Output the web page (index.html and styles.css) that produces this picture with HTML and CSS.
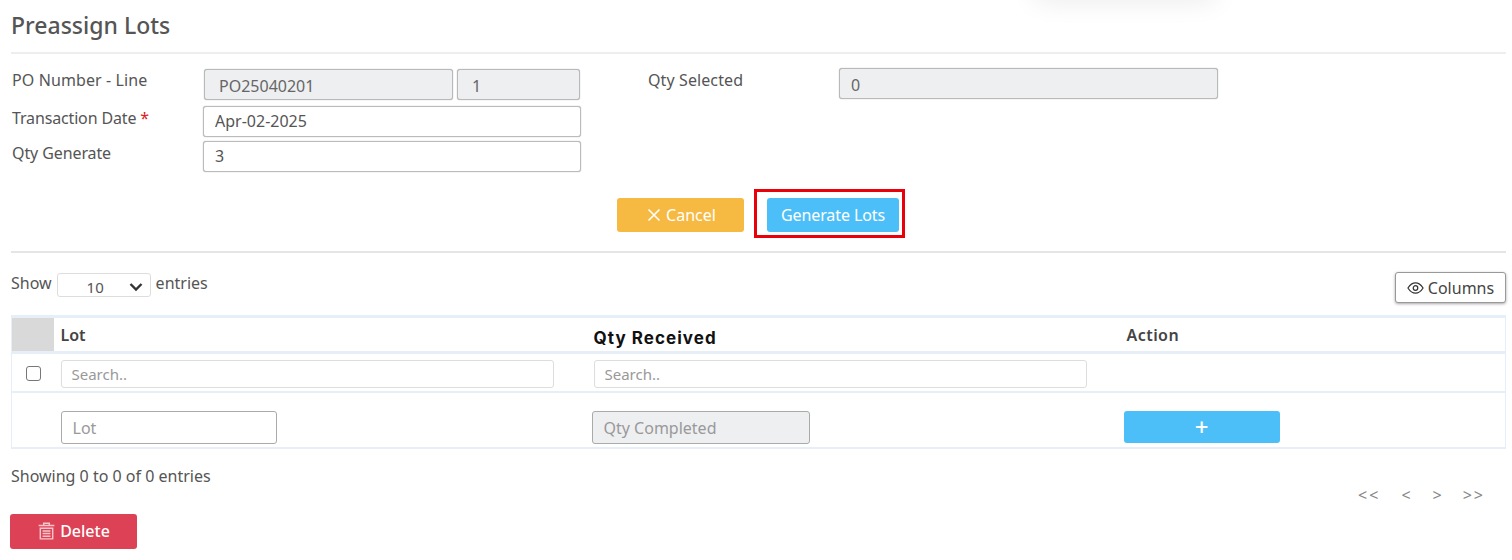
FILE: index.html
```html
<!DOCTYPE html>
<html lang="en">
<head>
<meta charset="utf-8">
<title>Preassign Lots</title>
<link rel="stylesheet" href="styles.css">
</head>
<body>
<div class="page">
  <div class="top-glow"></div>
  <h1 class="title">Preassign Lots</h1>
  <form class="form">
    <div class="col-left">
      <div class="row row-po">
        <label class="lbl">PO Number - Line</label>
        <input class="inp disabled po" value="PO25040201" disabled>
        <input class="inp disabled line" value="1" disabled>
      </div>
      <div class="row row-date">
        <label class="lbl">Transaction Date <span class="req">*</span></label>
        <input class="inp wide" value="Apr-02-2025">
      </div>
      <div class="row row-qty">
        <label class="lbl">Qty Generate</label>
        <input class="inp wide" value="3">
      </div>
    </div>
    <div class="col-right">
      <label class="lbl lbl-sel">Qty Selected</label>
      <input class="inp disabled sel" value="0" disabled>
    </div>
  </form>
  <div class="actions">
    <button type="button" class="btn cancel">
      <svg class="x-ico" viewBox="0 0 14 14" width="14" height="14"><path d="M1.5 1.5L12.5 12.5M12.5 1.5L1.5 12.5" stroke="#fff" stroke-width="1.6" fill="none"/></svg>
      Cancel
    </button>
    <div class="highlight"><button type="button" class="btn generate">Generate Lots</button></div>
  </div>
  <div class="toolbar">
    <div class="length">
      <span>Show</span>
      <span class="select"><span class="select-val">10</span>
        <svg viewBox="0 0 14 10" width="14" height="10"><path d="M1.5 2L7 7.5L12.5 2" stroke="#333" stroke-width="2.4" fill="none"/></svg>
      </span>
      <span>entries</span>
    </div>
    <button type="button" class="columns">
      <svg viewBox="0 0 18 14" width="17" height="14"><path d="M1 7C3.5 3 6 1.5 9 1.5S14.500 3 17 7C14.500 11 12 12.500 9 12.500S3.500 11 1 7Z" stroke="#333" stroke-width="1.300" fill="none"/><circle cx="9" cy="7" r="2.400" stroke="#333" stroke-width="1.300" fill="none"/></svg>
      Columns
    </button>
  </div>
  <table class="grid">
    <colgroup><col class="c0"><col class="c1"><col class="c2"><col></colgroup>
    <thead>
      <tr>
        <th class="check-head"></th>
        <th>Lot</th>
        <th class="dark">Qty Received</th>
        <th class="act">Action</th>
      </tr>
    </thead>
    <tbody>
      <tr class="search">
        <td class="check-cell"><input type="checkbox" class="check"></td>
        <td><input class="mini" placeholder="Search.."></td>
        <td><input class="mini" placeholder="Search.."></td>
        <td></td>
      </tr>
      <tr class="entry">
        <td></td>
        <td><input class="cell-inp" placeholder="Lot"></td>
        <td><input class="cell-inp off" placeholder="Qty Completed" disabled></td>
        <td><button type="button" class="btn add">+</button></td>
      </tr>
    </tbody>
  </table>
  <div class="footer">
    <div class="info">Showing 0 to 0 of 0 entries</div>
    <div class="pager"><span>&lt;&lt;</span><span>&lt;</span><span>&gt;</span><span>&gt;&gt;</span></div>
  </div>
  <button type="button" class="btn delete">
    <svg viewBox="0 0 16 16" width="19" height="18"><path d="M5.500 2.500V1.200H10.500V2.500M1 3.200H15M2.500 5.500H13.500V15H2.500ZM4.500 8H11.500M4.500 10.300H11.500M4.500 12.600H11.500" stroke="#f6c5cc" stroke-width="1.300" fill="none"/></svg>
    Delete
  </button>
</div>
</body>
</html>
```
FILE: styles.css
```css
* { box-sizing: border-box; }
html, body { margin: 0; background: #fff; }
body { font-family: "Noto Sans", "Open Sans", sans-serif; color: #555; font-size: 16px; }
.page { width: 1512px; height: 560px; padding: 0 6px 0 11px; overflow: hidden; position: relative; }
.top-glow { position: absolute; left: 1035px; top: -26px; width: 180px; height: 26px; box-shadow: 0 0 28px rgba(0,0,0,.09); }
.title { margin: 0; height: 43px; padding-top: 8px; font-size: 23px; line-height: 34px; font-weight: 500; color: #555; }
.form { display: flex; border-top: 2px solid #eee; height: 139px; padding-top: 15px; margin-top: 9px; }
.col-left { width: 570px; flex: none; }
.row { display: flex; align-items: flex-start; }
.lbl { font-size: 16px; line-height: 20px; width: 192px; flex: none; color: #555; white-space: nowrap; letter-spacing: .1px; }
.req { color: #e02020; }
.row-po { height: 37px; }
.row-date { height: 35px; }
.row-qty { height: 35px; }
.row-po .lbl { padding-top: 1px; padding-left: 1px; }
.row-date .lbl { padding-left: 1px; padding-top: 2px; letter-spacing: -.15px; }
.row-qty .lbl { padding-left: 1px; padding-top: 2px; letter-spacing: -.1px; }
.inp { font: 16px "Noto Sans", sans-serif; height: 31px; border: 1px solid #bbb; border-radius: 3px; color: #555; background: #fff; padding: 0 11px; outline: 0; box-shadow: 0 0 1px #999; }
.inp.disabled { background: #eeeff1; color: #666; border-color: #b9b9b9; }
.po { width: 249px; margin: 0 4px 0 1px; padding-left: 14px; padding-top: 2px; }
.line { width: 123px; padding-left: 14px; padding-top: 2px; }
.wide { width: 379px; padding-bottom: 2px; }
.col-right { display: flex; align-items: flex-start; padding-left: 67px; }
.lbl-sel { width: 191px; padding-top: 1px; }
.sel { width: 379px; margin-top: -1px; padding-top: 2px; }
.actions { display: flex; justify-content: flex-start; align-items: center; height: 48px; padding-left: 606px; gap: 10px; }
.btn { border: 0; border-radius: 3px; color: #fff; font: 16px "Noto Sans", sans-serif; height: 34px; }
.cancel { width: 127px; background: #f6b942; display: flex; align-items: center; justify-content: center; gap: 5px; margin-top: -1px; padding-left: 8px; }
.highlight { border: 3px solid #e8000b; padding: 6px 3px 6px 10px; width: 151px; height: 49px; margin-top: -4px; }
.generate { background: #4dbff8; width: 132px; padding: 0; letter-spacing: -.1px; display: block; }
.toolbar { display: flex; justify-content: space-between; align-items: flex-start; margin-top: 12px; border-top: 2px solid #e5e5e5; padding-top: 19px; height: 64px; }
.length { display: flex; align-items: center; gap: 5px; height: 25px; line-height: 20px; margin-top: -2px; }
.select { display: inline-flex; width: 94px; height: 24px; margin-top: 5px; border: 1px solid #ddd; border-radius: 3px; align-items: center; justify-content: space-between; padding: 3px 7px 0 29px; color: #555; font-size: 15px; }
.columns { width: 111px; height: 31px; display: inline-flex; align-items: center; justify-content: center; gap: 4px; border: 1px solid #999; border-radius: 3px; background: #fff; color: #444; font: 16px "Noto Sans", sans-serif; box-shadow: 0 1px 3px rgba(0,0,0,.35); }
.grid { width: 1495px; border-collapse: collapse; table-layout: fixed; border-left: 1px solid #e6eef7; border-right: 1px solid #e6eef7; border-bottom: 2px solid #e6eef7; margin: 0; }
.c0 { width: 42px; }
.c1 { width: 534px; }
.c2 { width: 533px; }
.grid th { text-align: left; font-size: 16px; font-weight: 600; color: #444; height: 36px; padding: 0 6px; border-top: 3px solid #e6eef7; border-bottom: 3px solid #e6eef7; }
.grid th:nth-child(2), .grid td:nth-child(2) { padding-left: 7px; }
.grid th.act { letter-spacing: .45px; }
.grid th.dark { color: #111; font-family: "Inter", sans-serif; font-size: 17px; font-weight: 700; letter-spacing: 1.05px; padding-top: 7px; white-space: nowrap; }
.grid .check-head { background: #d9d9d9; background-clip: padding-box; }
.search td { height: 39px; border-bottom: 2px solid #e6eef7; padding: 3px 6px 0; vertical-align: middle; }
.search .check-cell { padding-left: 7px; padding-right: 5px; }
.entry td { height: 56px; padding: 0 6px 3px; vertical-align: bottom; }
.check-cell { text-align: center; }
.check { width: 15px; height: 15px; margin: 0 0 3px; appearance: none; border: 1.500px solid #777; border-radius: 3px; background: #fff; display: inline-block; vertical-align: middle; }
.mini { width: 493px; height: 28px; font: 15px "Noto Sans", sans-serif; border: 1px solid #ddd; border-radius: 3px; padding: 0 10px; color: #555; outline: 0; display: block; }
.mini::placeholder, .cell-inp::placeholder { color: #999; opacity: 1; }
.cell-inp { width: 216px; height: 33px; font: 16px "Noto Sans", sans-serif; border: 1px solid #aaa; border-radius: 3px; padding: 2px 11px 0; outline: 0; display: block; }
.cell-inp.off { width: 218px; background: #eeeff1; margin-left: -2px; }
.add { width: 156px; height: 32px; background: #4dbff8; font-size: 24px; line-height: 30px; padding: 0; margin-left: -3px; margin-bottom: 1px; display: block; font-weight: 500; }
.footer { display: flex; justify-content: space-between; align-items: flex-start; height: 65px; padding-top: 17px; line-height: 20px; }
.pager { display: flex; color: #888; font-size: 16px; margin-top: 19px; margin-right: 21px; }
.pager span:nth-child(1) { letter-spacing: 2px; margin-right: 21px; }
.pager span:nth-child(2) { margin-right: 22px; }
.pager span:nth-child(3) { margin-right: 21px; }
.pager span:nth-child(4) { letter-spacing: 2px; }
.delete { display: flex; align-items: center; justify-content: center; gap: 4px; width: 127px; height: 35px; background: #dd4155; margin-left: -1px; font-weight: 500; }
```
